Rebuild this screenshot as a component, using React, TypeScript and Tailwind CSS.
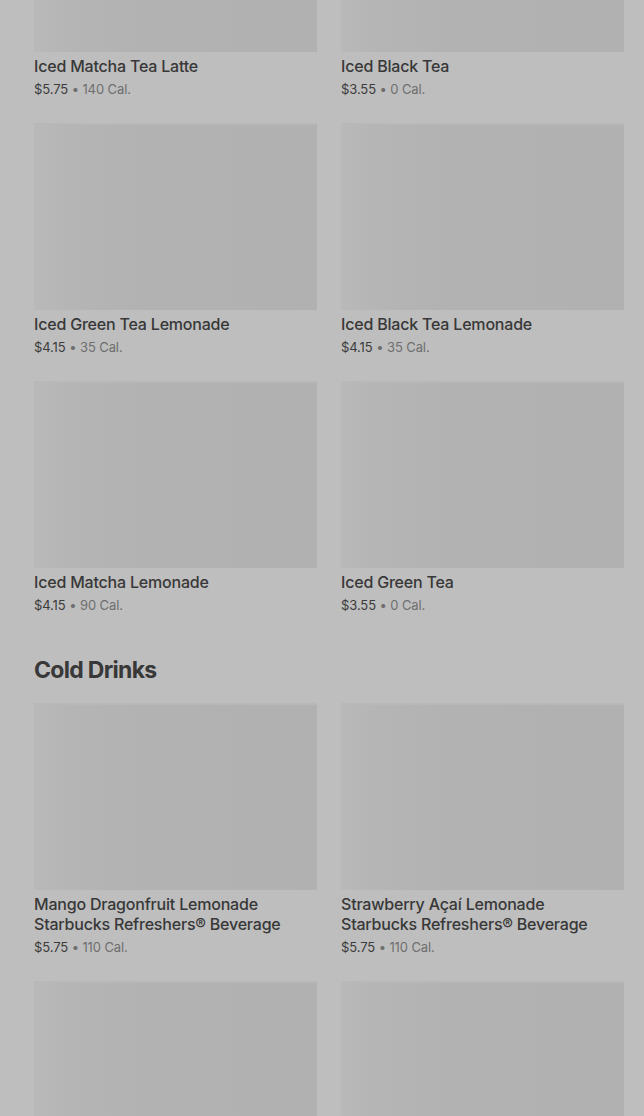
import React from 'react';

type Item = { name: string; price: string; cal: string };

const teas: Item[] = [
  { name: 'Iced Matcha Tea Latte', price: '$5.75', cal: '140 Cal.' },
  { name: 'Iced Black Tea', price: '$3.55', cal: '0 Cal.' },
  { name: 'Iced Green Tea Lemonade', price: '$4.15', cal: '35 Cal.' },
  { name: 'Iced Black Tea Lemonade', price: '$4.15', cal: '35 Cal.' },
  { name: 'Iced Matcha Lemonade', price: '$4.15', cal: '90 Cal.' },
  { name: 'Iced Green Tea', price: '$3.55', cal: '0 Cal.' },
];

const coldDrinks: Item[] = [
  { name: 'Mango Dragonfruit Lemonade Starbucks Refreshers® Beverage', price: '$5.75', cal: '110 Cal.' },
  { name: 'Strawberry Açaí Lemonade Starbucks Refreshers® Beverage', price: '$5.75', cal: '110 Cal.' },
  { name: '', price: '', cal: '' },
  { name: '', price: '', cal: '' },
];

function Card({ item }: { item: Item }) {
  return (
    <div className="flex flex-col">
      {/* skeleton image */}
      <div className="h-[187px] w-full border-t-2 border-[#b8b8b8] bg-[linear-gradient(90deg,#b9b9b9_0%,#b5b5b5_12%,#b2b2b2_40%,#b1b1b1_100%)]" />
      {item.name && (
        <div className="pt-1 pr-5">
          <h3 className="text-[16px] leading-5 font-medium text-[#383838] tracking-[-0.2px]">{item.name}</h3>
          <p className="mt-[3px] text-[13px] leading-5 tracking-[-0.1px] text-[#3c3c3c]">
            {item.price}
            <span className="text-[#6e6e6e]"> • {item.cal}</span>
          </p>
        </div>
      )}
    </div>
  );
}

export default function App() {
  return (
    <div className="min-h-screen bg-[#bebebe] font-['Inter','Liberation_Sans',sans-serif] overflow-hidden h-[1116px]">
      <div className="pl-[34px] pr-[20px] -mt-[135px]">
        <div className="grid grid-cols-2 gap-x-6 gap-y-6">
          {teas.map((t, i) => (
            <Card key={i} item={t} />
          ))}
        </div>

        <h2 className="mt-[39px] mb-[17px] text-[23px] leading-8 font-bold tracking-[-0.7px] text-[#383838]">
          Cold Drinks
        </h2>

        <div className="grid grid-cols-2 gap-x-6 gap-y-6">
          {coldDrinks.map((t, i) => (
            <Card key={i} item={t} />
          ))}
        </div>
      </div>
    </div>
  );
}
